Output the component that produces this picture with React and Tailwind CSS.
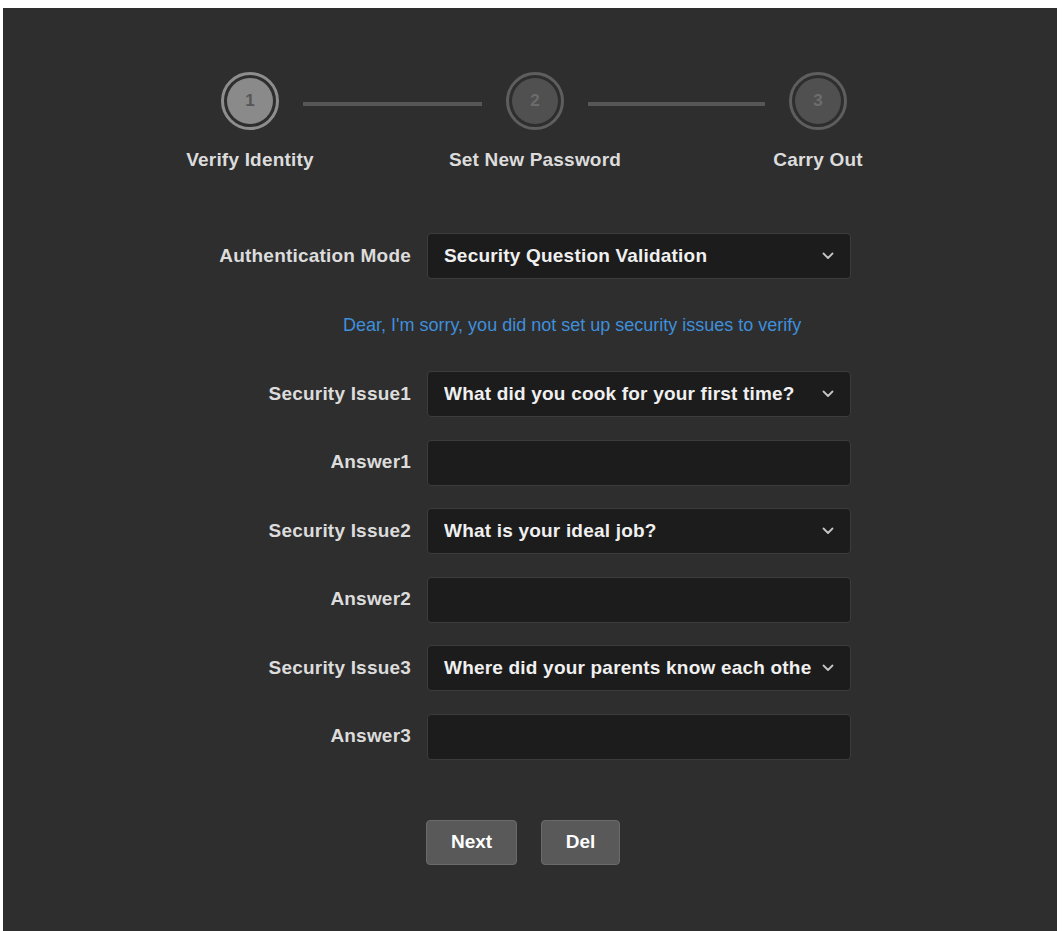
import React from 'react'

const font = { fontFamily: '"Liberation Sans", Arial, sans-serif' }

const Chevron = () => (
  <svg width="12" height="8" viewBox="0 0 12 8" className="shrink-0">
    <polyline points="1.5,1.5 6,6 10.5,1.5" fill="none" stroke="#c4c4c4" strokeWidth="1.8" strokeLinecap="round" strokeLinejoin="round" />
  </svg>
)

const Step = ({ n, label, active }) => (
  <div className="flex flex-col items-center w-[58px]">
    <div className={`w-[58px] h-[58px] rounded-full border-[3px] p-[3px] ${active ? 'border-[#8e8e8e]' : 'border-[#5e5e5e]'}`}>
      <div className={`w-full h-full rounded-full flex items-center justify-center text-[17px] font-bold ${active ? 'bg-[#8a8a8a] text-[#565656]' : 'bg-[#505050] text-[#6c6c6c]'}`}>
        {n}
      </div>
    </div>
    <div className="mt-[19px] whitespace-nowrap text-[19px] leading-[22px] font-bold tracking-[0.2px] text-[#dcdcdc]">
      {label}
    </div>
  </div>
)

const Select = ({ value }) => (
  <div className="w-[424px] h-[46px] rounded-[4px] border border-[#3c3c3c] bg-[#1c1c1c] flex items-center pl-[16px] pr-[16px]">
    <span className="flex-1 overflow-hidden whitespace-nowrap text-[19px] font-bold tracking-[0.2px] text-[#f0f0f0]">
      {value}
    </span>
    <span className="ml-[6px]"><Chevron /></span>
  </div>
)

const Input = () => (
  <div className="w-[424px] h-[46px] rounded-[4px] border border-[#3c3c3c] bg-[#1c1c1c]" />
)

const Row = ({ label, children }) => (
  <div className="flex items-center gap-[16px]">
    <div className="w-[308px] text-right text-[19px] font-bold tracking-[0.2px] text-[#dcdcdc]">{label}</div>
    {children}
  </div>
)

const App = () => {
  return (
    <div className="min-h-screen bg-white pt-[8px] pl-[3px] pr-[5px]" style={font}>
      <div className="bg-[#2e2e2e] min-h-[923px]">

        {/* STEPPER */}
        <div className="flex items-start pl-[218px] pt-[64px]">
          <Step n="1" label="Verify Identity" active />
          <div className="w-[179px] h-[4px] bg-[#575757] mt-[30px] mx-[24px]" />
          <Step n="2" label="Set New Password" />
          <div className="w-[177px] h-[4px] bg-[#575757] mt-[30px] mx-[24px]" />
          <Step n="3" label="Carry Out" />
        </div>

        {/* FORM */}
        <div className="pl-[100px] pt-[62px]">
          <Row label="Authentication Mode">
            <Select value="Security Question Validation" />
          </Row>

          <div className="ml-[240px] mt-[36px] h-[20px] text-[18px] leading-[20px] text-[#3f8fdc] whitespace-nowrap">
            Dear, I'm sorry, you did not set up security issues to verify
          </div>

          <div className="mt-[36px] flex flex-col gap-[22.5px]">
            <Row label="Security Issue1">
              <Select value="What did you cook for your first time?" />
            </Row>
            <Row label="Answer1"><Input /></Row>
            <Row label="Security Issue2">
              <Select value="What is your ideal job?" />
            </Row>
            <Row label="Answer2"><Input /></Row>
            <Row label="Security Issue3">
              <Select value="Where did your parents know each othe" />
            </Row>
            <Row label="Answer3"><Input /></Row>
          </div>

          <div className="flex gap-[24px] ml-[323px] mt-[60px]">
            <button className="w-[91px] h-[45px] rounded-[4px] border border-[#6a6a6a] bg-[#595959] text-[19px] font-bold text-white">
              Next
            </button>
            <button className="w-[79px] h-[45px] rounded-[4px] border border-[#6a6a6a] bg-[#595959] text-[19px] font-bold text-white">
              Del
            </button>
          </div>
        </div>

      </div>
    </div>
  )
}

export default App
